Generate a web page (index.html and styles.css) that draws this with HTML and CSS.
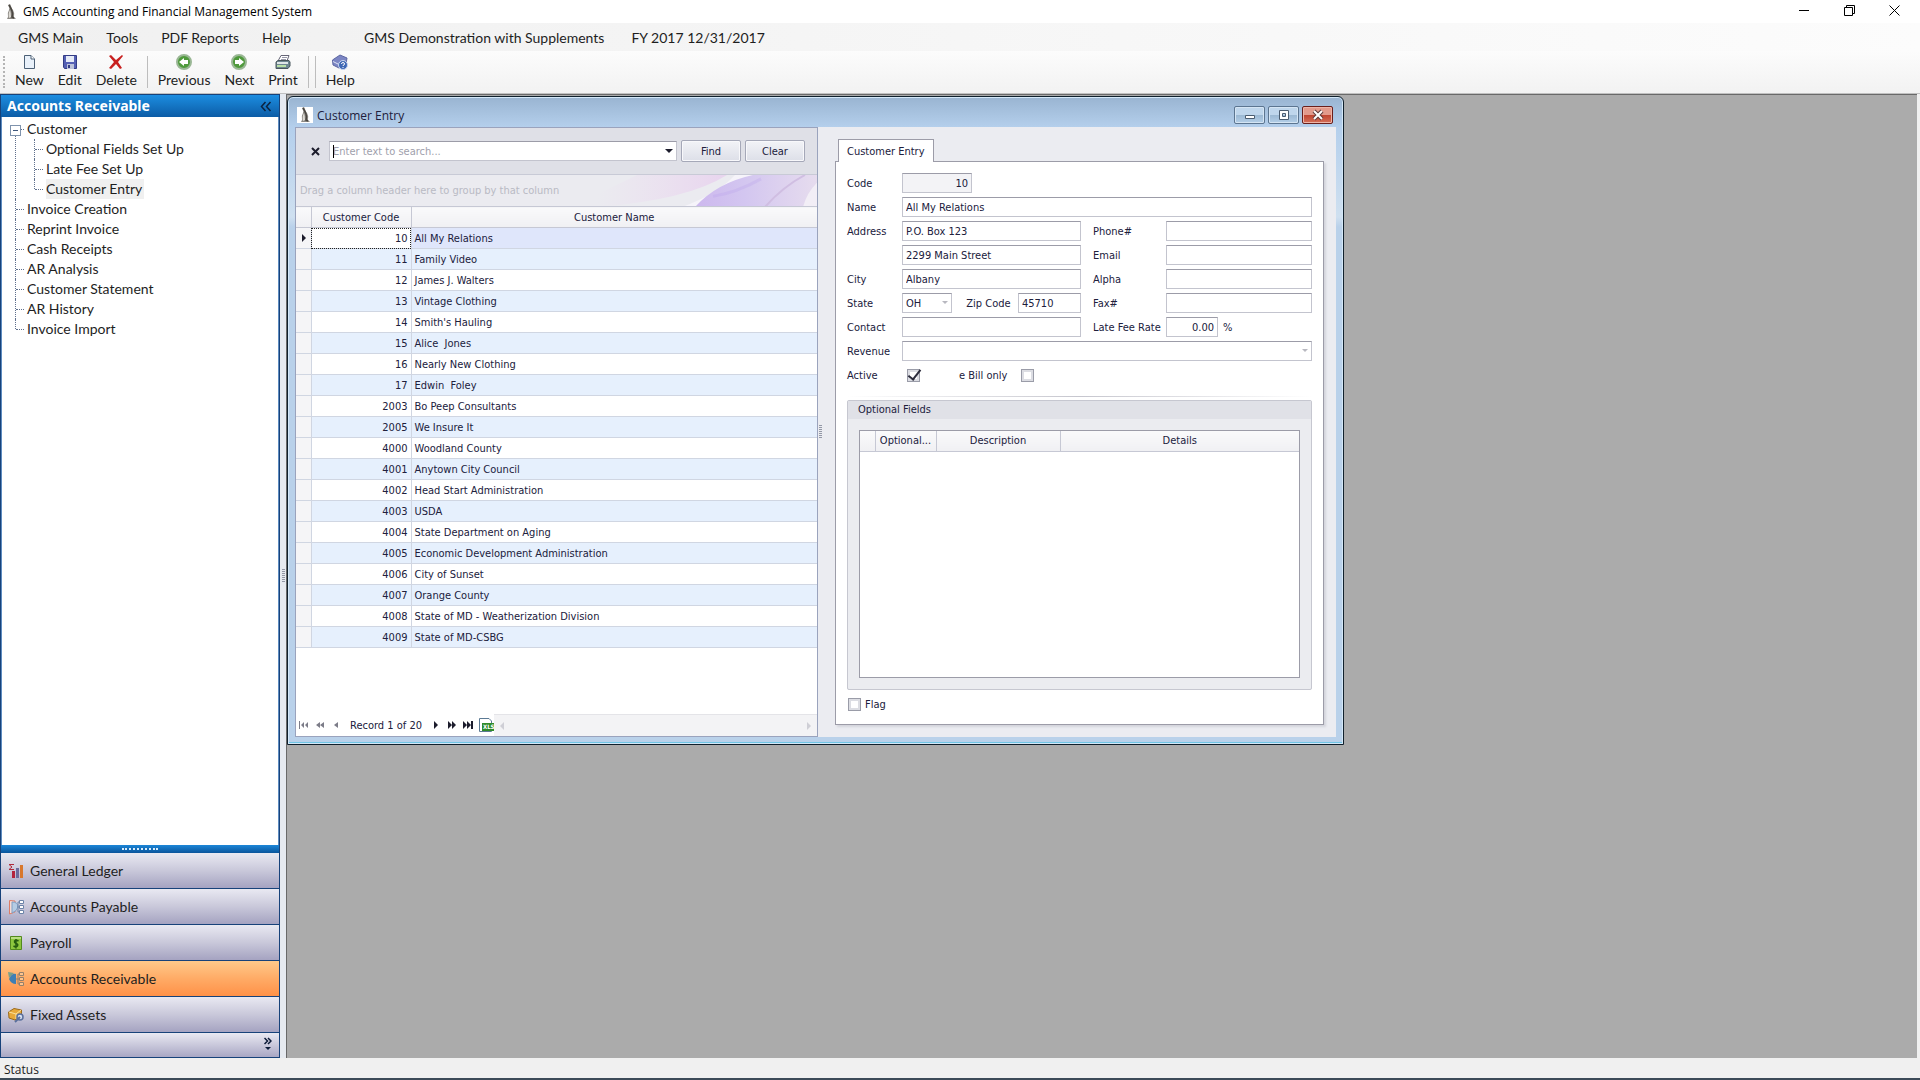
FILE: index.html
```html
<!DOCTYPE html>
<html lang="en">

<head>
  <meta charset="UTF-8">
  <title>GMS Accounting and Financial Management System</title>
  <link rel="stylesheet" href="styles.css">
</head>

<body>
  <svg width="0" height="0" class="defs">
    <symbol id="penguin" viewBox="0 0 16 16">
      <path d="M5 1 L7 0 L8 2 Q8 4 10 6 Q12 9 11 13 L13 15 H4 L5 13 Q4 9 6 6 Q7 4 5 1Z" fill="#8b8883" />
      <path d="M7 6 Q5 9 6 14 L8 13 Q8 9 7 6Z" fill="#dedbd5" />
      <path d="M6 1 Q8 4 9 7 Q10 10 9 13 L11 14" stroke="#4a4641" stroke-width="1.5" fill="none" />
    </symbol>
    <symbol id="arrow" viewBox="0 0 16 16">
      <circle cx="8" cy="8" r="7" fill="#4f9a3c" stroke="#9ab795" stroke-width="2" />
      <path d="M3 8 L8 4 V6 H12 V10 H8 V12Z" fill="#fff" />
    </symbol>
  </svg>

  <header class="titlebar">
    <svg class="app-icon" width="16" height="16"><use href="#penguin" /></svg>
    <span class="app-title">GMS Accounting and Financial Management System</span>
    <div class="sys-buttons">
      <button aria-label="Minimize"><svg width="11" height="11"><path d="M0 5.5H10" stroke="#000" /></svg></button>
      <button aria-label="Restore"><svg width="11" height="11"><path d="M0.5 2.5H8.5V10.5H0.5ZM2.5 2.5V0.5H10.5V8.5H8.5" stroke="#000" fill="none" /></svg></button>
      <button aria-label="Close"><svg width="11" height="11"><path d="M0.5 0.5L10.5 10.5M10.5 0.5L0.5 10.5" stroke="#000" /></svg></button>
    </div>
  </header>

  <nav class="menubar">
    <button>GMS Main</button>
    <button>Tools</button>
    <button>PDF Reports</button>
    <button>Help</button>
    <span class="company">GMS Demonstration with Supplements</span>
    <span class="fiscal">FY 2017 12/31/2017</span>
  </nav>

  <div class="toolbar">
    <button>
      <svg width="16" height="16"><path d="M3.5 1.5H10L13.5 5V14.5H3.5Z" fill="#e9f1fa" stroke="#4c6076" /><path d="M10 1.5V5H13.5" fill="#fff" stroke="#4c6076" /></svg>
      New
    </button>
    <button>
      <svg width="16" height="16"><path d="M1.5 1.5H14.5V14.5H2.5L1.5 13Z" fill="#5560b4" stroke="#333c85" /><path d="M4 2H12V8H4Z" fill="#e6ebf7" /><path d="M5 10H12V15H5Z" fill="#bcc2da" /><path d="M6 11H8V14H6Z" fill="#333c85" /></svg>
      Edit
    </button>
    <button>
      <svg width="16" height="16"><path d="M1 2L3 1L8 6L14 1L15 2L10 8L14 14L12 15L8 10L3 15L1 14L6 8Z" fill="#c8201f" /></svg>
      Delete
    </button>
    <i class="sep"></i>
    <button>
      <svg width="16" height="16"><use href="#arrow" /></svg>
      Previous
    </button>
    <button>
      <svg width="16" height="16"><g transform="rotate(180 8 8)"><use href="#arrow" /></g></svg>
      Next
    </button>
    <button>
      <svg width="16" height="16"><path d="M6 1.5H14L12 7H3Z" fill="#fff" stroke="#667" /><path d="M7 3.5H12M6 5.5H11" stroke="#99a" /><path d="M1 8L3 6.5H14L15 8V12L13 14.5H1Z" fill="#6e8791" stroke="#49565c" /><path d="M2 8H13V10H2Z" fill="#dfe6e8" /><path d="M2 11H11V13H2Z" fill="#b9e0a6" /></svg>
      Print
    </button>
    <i class="sep"></i>
    <i class="sep"></i>
    <button>
      <svg width="16" height="16"><path d="M0.5 6L8 1L15 4L14 10L7 14L1 11Z" fill="#7c86c4" stroke="#5c66a2" /><path d="M1 7.5L7 10.5L13 7" stroke="#dfe3f5" fill="none" /><circle cx="11" cy="11" r="4.5" fill="#3f68b5" stroke="#c9d6f0" /><path d="M9.5 10Q9.5 8.5 11 8.5Q12.5 8.5 12.5 10Q12.5 11 11 11.5V12M11 13V14" stroke="#fff" fill="none" /></svg>
      Help
    </button>
  </div>

  <main class="workspace">
    <aside class="sidebar">
      <div class="side-head">
        <h2>Accounts Receivable</h2>
        <svg width="12" height="11"><path d="M5.5 1L1.5 5.5L5.5 10M10.5 1L6.5 5.5L10.5 10" stroke="#0b2340" stroke-width="1.5" fill="none" /></svg>
      </div>

      <div class="side-body">
        <ul class="tree">
          <li class="open"><a href="#">Customer</a>
            <ul>
              <li><a href="#">Optional Fields Set Up</a></li>
              <li><a href="#">Late Fee Set Up</a></li>
              <li><a href="#" class="current">Customer Entry</a></li>
            </ul>
          </li>
          <li><a href="#">Invoice Creation</a></li>
          <li><a href="#">Reprint Invoice</a></li>
          <li><a href="#">Cash Receipts</a></li>
          <li><a href="#">AR Analysis</a></li>
          <li><a href="#">Customer Statement</a></li>
          <li><a href="#">AR History</a></li>
          <li><a href="#">Invoice Import</a></li>
        </ul>
      </div>

      <div class="side-grip"><span></span></div>

      <div class="modules">
        <button>
          <svg width="16" height="16"><path d="M6 1.5H1L4 4L1 6.5H6" stroke="#b02a3a" fill="none" /><path d="M4 8H7V15H4Z" fill="#b3243c" /><path d="M8 5H11V15H8Z" fill="#6b6b9c" /><path d="M12 2H15V15H12Z" fill="#d8772c" /></svg>
          General Ledger
        </button>
        <button>
          <svg width="16" height="16"><path d="M1.5 1.5L7 2V13L1.5 15Z" fill="#f6dcd6" stroke="#dc7c66" /><path d="M4 3Q10 3 10 8Q9 12 4 14Z" fill="#b5cce4" stroke="#7f9fc4" /><path d="M9 8H12M10 3V13M10 3H12M10 13H12" stroke="#7088ac" fill="none" /><path d="M11.5 1.5H15.5V4.5H11.5ZM11.5 6.5H15.5V9.5H11.5ZM11.5 11.5H15.5V14.5H11.5Z" fill="#fff" stroke="#6c84a8" /></svg>
          Accounts Payable
        </button>
        <button>
          <svg width="16" height="16"><path d="M2.5 1.5H13.5V14.5H2.5Z" fill="#8cc63e" stroke="#538a1e" /><path d="M3 3H13" stroke="#e8f6c8" /><path d="M10.5 6Q8 4.5 6.5 6Q6 7.5 8 8.5Q10.500 9 9.5 11Q8 12.5 5.5 11M8 4V13.5" stroke="#265c10" stroke-width="1.5" fill="none" /></svg>
          Payroll
        </button>
        <button class="active">
          <svg width="16" height="16"><path d="M0 1L6 2L1 7Z" fill="#7aa08a" /><path d="M1 8Q4 2 8 3V13Q3 13 1 8Z" fill="#3f7fb4" /><path d="M8 8H12M10 3V13M10 3H12M10 13H12" stroke="#94806c" fill="none" /><path d="M11.5 1.5H15.5V4.5H11.5ZM11.5 6.5H15.5V9.5H11.5ZM11.5 11.5H15.5V14.5H11.5Z" fill="#ffc48c" stroke="#94806c" /></svg>
          Accounts Receivable
        </button>
        <button>
          <svg width="16" height="16"><path d="M0.5 5L6 1.5L13.5 3L13.5 8L7 13L1 11Z" fill="#e8a93a" stroke="#9a6a1c" /><path d="M1 5L8 7L13 3M8 7V12" stroke="#fbe2a0" fill="none" /><circle cx="12" cy="10" r="3" fill="#d5dff0" stroke="#5a6f9c" stroke-width="1.5" /><path d="M7 15L12 10" stroke="#5a6f9c" stroke-width="2" /></svg>
          Fixed Assets
        </button>
        <div class="more">
          <svg width="8" height="14"><path d="M0.5 1L3.5 4L0.5 7M4 1L7 4L4 7" stroke="#0b1a38" stroke-width="1.5" fill="none" /><path d="M1 10H7L4 13Z" fill="#0b1a38" /></svg>
        </div>
      </div>
    </aside>

    <div class="splitter"><span></span></div>

    <section class="desktop">
      <div class="window">
        <div class="win-head">
          <svg class="win-icon" width="16" height="16"><use href="#penguin" /></svg>
          <h1>Customer Entry</h1>
          <button aria-label="Minimize"><svg width="12" height="12"><path d="M1.5 6.5H10.5V9.5H1.5Z" fill="#fff" stroke="#4a5c70" /></svg></button>
          <button aria-label="Maximize"><svg width="12" height="12"><path d="M1.5 1.5H10.5V10.5H1.5ZM4.5 4.5V7.5H7.5V4.5Z" fill="#fff" fill-rule="evenodd" stroke="#4a5c70" /></svg></button>
          <button class="close" aria-label="Close"><svg width="12" height="12"><path d="M2 2L10 10M10 2L2 10" stroke="#5f3a3a" stroke-width="4" /><path d="M2 2L10 10M10 2L2 10" stroke="#fff" stroke-width="2" /></svg></button>
        </div>

        <div class="win-body">
          <div class="list">
            <div class="search">
              <button class="search-close" aria-label="Close search"><svg width="9" height="9"><path d="M1 1L8 8M8 1L1 8" stroke="#1c1c2c" stroke-width="2" /></svg></button>
              <div class="search-box">
                <input type="text" placeholder="Enter text to search..." aria-label="Search">
              </div>
              <button class="btn">Find</button>
              <button class="btn">Clear</button>
            </div>

            <div class="group-panel">
              <span>Drag a column header here to group by that column</span>
              <svg width="240" height="32" viewBox="0 0 240 33" preserveAspectRatio="none">
                <defs>
                  <linearGradient id="pink"><stop offset="0" stop-color="#ecdcf0" stop-opacity="0" /><stop offset="1" stop-color="#e8d4ee" /></linearGradient>
                  <linearGradient id="violet"><stop offset="0" stop-color="#cdb8ee" /><stop offset="0.4" stop-color="#d3c6f0" /><stop offset="1" stop-color="#e6dcee" /></linearGradient>
                </defs>
                <path d="M20 33Q110 26 150 0H60L20 20Z" fill="url(#pink)" />
                <path d="M105 33Q140 20 158 0H176Q145 14 120 33Z" fill="#f6f4fa" />
                <path d="M118 33Q140 8 176 0H240V8Q232 20 228 33Z" fill="url(#violet)" />
                <path d="M188 33Q206 12 228 0" stroke="#d0bee2" stroke-width="2" fill="none" />
                <path d="M136 22Q160 18 184 4" stroke="#b9a2ea" stroke-width="3" fill="none" opacity="0.3" />
                <path d="M226 33Q230 18 240 8V33Z" fill="#f2eef6" />
              </svg>
            </div>

            <table class="grid">
              <thead>
                <tr><th class="mark"></th><th class="code">Customer Code</th><th>Customer Name</th></tr>
              </thead>
              <tbody>
                <tr class="selected"><td><i class="pointer"></i></td><td>10</td><td>All My Relations</td></tr>
                <tr><td></td><td>11</td><td>Family Video</td></tr>
                <tr><td></td><td>12</td><td>James J. Walters</td></tr>
                <tr><td></td><td>13</td><td>Vintage Clothing</td></tr>
                <tr><td></td><td>14</td><td>Smith's Hauling</td></tr>
                <tr><td></td><td>15</td><td>Alice&nbsp; Jones</td></tr>
                <tr><td></td><td>16</td><td>Nearly New Clothing</td></tr>
                <tr><td></td><td>17</td><td>Edwin&nbsp; Foley</td></tr>
                <tr><td></td><td>2003</td><td>Bo Peep Consultants</td></tr>
                <tr><td></td><td>2005</td><td>We Insure It</td></tr>
                <tr><td></td><td>4000</td><td>Woodland County</td></tr>
                <tr><td></td><td>4001</td><td>Anytown City Council</td></tr>
                <tr><td></td><td>4002</td><td>Head Start Administration</td></tr>
                <tr><td></td><td>4003</td><td>USDA</td></tr>
                <tr><td></td><td>4004</td><td>State Department on Aging</td></tr>
                <tr><td></td><td>4005</td><td>Economic Development Administration</td></tr>
                <tr><td></td><td>4006</td><td>City of Sunset</td></tr>
                <tr><td></td><td>4007</td><td>Orange County</td></tr>
                <tr><td></td><td>4008</td><td>State of MD - Weatherization Division</td></tr>
                <tr><td></td><td>4009</td><td>State of MD-CSBG</td></tr>
              </tbody>
            </table>

            <div class="navigator">
              <div class="records">
                <button class="dim" aria-label="First"><svg width="10" height="8"><path d="M0 0H1V8H0ZM5 1V7L2 4ZM9 1V7L6 4Z" /></svg></button>
                <button class="dim" aria-label="Previous page"><svg width="10" height="8"><path d="M5 1V7L1 4ZM9 1V7L5 4Z" /></svg></button>
                <button class="dim" aria-label="Previous"><svg width="10" height="8"><path d="M7 1V7L3 4Z" /></svg></button>
                <span>Record 1 of 20</span>
                <button aria-label="Next"><svg width="10" height="8"><path d="M3 0V8L7 4Z" /></svg></button>
                <button aria-label="Next page"><svg width="10" height="8"><path d="M1 0V8L5 4ZM5 0V8L9 4Z" /></svg></button>
                <button aria-label="Last"><svg width="10" height="8"><path d="M0 0V8L4 4ZM4 0V8L8 4ZM8 0H10V8H8Z" /></svg></button>
                <button class="xls" aria-label="Export"><svg width="16" height="16"><path d="M0.5 1.5H10L12.5 4V14.5H0.5Z" fill="#fff" stroke="#5c7a94" /><path d="M3 6H15V14H3Z" fill="#2f8a2a" /><text x="4" y="12" font-size="6" font-weight="bold" fill="#fff">XLS</text></svg></button>
              </div>
              <div class="scroll"><i class="left"></i><i class="right"></i></div>
            </div>
          </div>

          <div class="win-splitter"><span></span></div>

          <div class="detail">
            <div class="tab">Customer Entry</div>
            <form class="page">
              <div class="fields">
                <label for="code">Code</label>
                <input id="code" class="short num" type="text" value="10" readonly>

                <label for="name">Name</label>
                <input id="name" class="wide" type="text" value="All My Relations">

                <label for="address1">Address</label>
                <input id="address1" type="text" value="P.O. Box 123">
                <label for="phone" class="second">Phone#</label>
                <input id="phone" type="text">

                <label for="address2"></label>
                <input id="address2" type="text" value="2299 Main Street" aria-label="Address line 2">
                <label for="email" class="second">Email</label>
                <input id="email" type="text">

                <label for="city">City</label>
                <input id="city" type="text" value="Albany">
                <label for="alpha" class="second">Alpha</label>
                <input id="alpha" type="text">

                <label for="state">State</label>
                <div class="pair">
                  <div class="drop state"><select id="state"><option>OH</option></select></div>
                  <label for="zip">Zip Code</label>
                  <input id="zip" class="zip" type="text" value="45710">
                </div>
                <label for="fax" class="second">Fax#</label>
                <input id="fax" type="text">

                <label for="contact">Contact</label>
                <input id="contact" type="text">
                <label for="rate" class="second">Late Fee Rate</label>
                <div class="rate"><input id="rate" class="num" type="text" value="0.00"><span>%</span></div>

                <label for="revenue">Revenue</label>
                <div class="drop wide"><select id="revenue"><option></option></select></div>

                <label for="active">Active</label>
                <div class="checks wide">
                  <input id="active" type="checkbox" checked>
                  <label for="ebill">e Bill only</label>
                  <input id="ebill" type="checkbox">
                </div>
              </div>

              <hr>

              <fieldset class="optional">
                <h3>Optional Fields</h3>
                <div class="optional-body">
                  <table>
                    <thead>
                      <tr><th class="mark"></th><th class="opt">Optional...</th><th class="desc">Description</th><th>Details</th></tr>
                    </thead>
                  </table>
                </div>
              </fieldset>

              <div class="flag">
                <input id="flag" type="checkbox">
                <label for="flag">Flag</label>
              </div>
            </form>
          </div>
        </div>
      </div>
    </section>
  </main>

  <footer class="status">Status</footer>
</body>

</html>
```

FILE: styles.css
```css
* {
  box-sizing: border-box;
}

body {
  margin: 0;
  height: 100vh;
  display: flex;
  flex-direction: column;
  font-family: Lato, "Liberation Sans", sans-serif;
  font-size: 14px;
  color: #1e1e1e;
  background: #f0f0f0;
  overflow: hidden;
}

button {
  font: inherit;
  color: inherit;
  background: none;
  border: 0;
  padding: 0;
}

a {
  color: inherit;
  text-decoration: none;
}

svg {
  display: block;
}

.defs {
  position: absolute;
}

/* title bar */
.titlebar {
  display: flex;
  align-items: center;
  height: 23px;
  flex: none;
  background: #fff;
  padding: 0 3px;
}

.app-title {
  flex: 1;
  margin-left: 4px;
  font-family: "Open Sans", "Noto Sans", sans-serif;
  font-size: 12px;
  color: #000;
}

.sys-buttons {
  display: flex;
}

.sys-buttons button {
  width: 45px;
  height: 23px;
  display: flex;
  align-items: center;
  justify-content: center;
  padding-bottom: 2px;
}

/* menu */
.menubar {
  display: flex;
  align-items: center;
  height: 28px;
  flex: none;
  padding-left: 18px;
  gap: 23px;
  background: linear-gradient(to right, #f0f0f0, #fcfcfc);
}

.company {
  margin-left: 50px;
}

.fiscal {
  margin-left: 4px;
}

/* toolbar */
.toolbar {
  display: flex;
  align-items: center;
  height: 43px;
  flex: none;
  padding-left: 8px;
  background: linear-gradient(#fcfcfc, #f2f2f2);
  border-bottom: 1px solid #c0c0c0;
  position: relative;
}

.toolbar::before {
  content: "";
  position: absolute;
  left: 3px;
  top: 5px;
  height: 32px;
  border-left: 2px dotted #b4b4b4;
}

.toolbar button {
  display: flex;
  flex-direction: column;
  align-items: center;
  line-height: 20px;
  padding: 0 7px;
}

.sep {
  width: 1px;
  height: 32px;
  margin: 0 3px;
  background: #bdbdbd;
}

.workspace {
  display: flex;
  flex: 1;
  min-height: 0;
}

/* sidebar */
.sidebar {
  width: 280px;
  display: flex;
  flex-direction: column;
  border: 1px solid #17427a;
}

.side-head {
  display: flex;
  align-items: center;
  justify-content: space-between;
  height: 22px;
  padding: 0 7px 0 6px;
  background: linear-gradient(#1c8de0, #0c5ca6);
}

.side-head h2 {
  margin: 0;
  font-family: "Noto Sans", sans-serif;
  font-size: 14px;
  line-height: 20px;
  color: #fff;
}

.side-body {
  flex: 1;
  background: #fff;
  border: 1px solid #5e8cc0;
  border-width: 0 1px;
  padding-top: 2px;
}

.tree,
.tree ul {
  list-style: none;
  margin: 0;
  padding: 0;
}

.tree {
  padding-left: 13px;
}

.tree li {
  position: relative;
  line-height: 20px;
  padding-left: 12px;
}

/* dotted branch lines */
.tree li::before {
  content: "";
  position: absolute;
  left: 0;
  top: 0;
  height: 100%;
  border-left: 1px dotted #60708c;
}

.tree li:last-child::before {
  height: 10px;
}

.tree li::after {
  content: "";
  position: absolute;
  left: 1px;
  top: 10px;
  width: 8px;
  border-top: 1px dotted #60708c;
}

.tree .open::before {
  top: 14px;
  height: calc(100% - 14px);
}

.tree .open > ul {
  margin-left: 7px;
}

.tree .open > a::before {
  content: "";
  position: absolute;
  left: -5px;
  top: 6px;
  width: 9px;
  height: 9px;
  border: 1px solid #7f93ad;
  background: linear-gradient(#40587c, #40587c) center / 5px 1px no-repeat #fff;
  z-index: 1;
}

.tree a {
  display: inline-block;
  padding: 0 2px 0 0;
}

.tree .current {
  background: #f0f0f0;
}

.side-grip {
  height: 8px;
  display: flex;
  align-items: center;
  justify-content: center;
  background: linear-gradient(#1c86d8, #0a559c);
}

.side-grip span {
  width: 36px;
  border-top: 2px dotted #d8ecfc;
}

.modules button {
  display: flex;
  align-items: center;
  gap: 6px;
  width: 100%;
  height: 36px;
  padding-left: 7px;
  border-bottom: 1px solid #17427a;
  background: linear-gradient(#e9e9f2, #c9c8da 50%, #a5a3c1);
}

.modules .active {
  background: linear-gradient(#ffc98a, #ffab66 50%, #ff9148);
}

.more {
  display: flex;
  justify-content: flex-end;
  height: 24px;
  padding: 4px 7px 0 0;
  background: linear-gradient(#e9e9f2, #a9a7c4);
}

.splitter {
  display: flex;
  align-items: center;
  justify-content: center;
  width: 6px;
  background: #e6eaf0;
}

.splitter span,
.win-splitter span {
  width: 3px;
  height: 14px;
  background: repeating-linear-gradient(#9398a6 0 1px, transparent 1px 2px);
}

/* mdi area */
.desktop {
  flex: 1;
  margin-right: 3px;
  position: relative;
  background: #ababab;
  border: 1px solid #696969;
  border-width: 1px 0 0 1px;
}

.window {
  position: absolute;
  left: 0;
  top: 1px;
  width: 1057px;
  height: 649px;
  display: flex;
  flex-direction: column;
  padding: 0 7px 7px 7px;
  border: 1px solid #10202c;
  border-radius: 6px 6px 0 0;
  background: linear-gradient(#99b4d1, #b4cfec 30px, #cfe0f0 120px, #b9d1ea 130px);
  box-shadow: inset 0 0 0 1px #d4e8f8, inset 0 -2px 0 #6fc4e4;
  font-family: "DejaVu Sans Condensed", "Noto Sans", sans-serif;
  font-size: 11px;
  color: #20203c;
}

.win-head {
  display: flex;
  align-items: center;
  gap: 3px;
  height: 30px;
  padding: 6px 3px 0 2px;
}

.win-icon {
  background: #fff;
}

.win-head h1 {
  flex: 1;
  margin: 0 0 0 1px;
  font-family: "Open Sans", "Noto Sans", sans-serif;
  font-size: 12px;
  font-weight: normal;
}

.win-head button {
  display: flex;
  align-items: center;
  justify-content: center;
  width: 31px;
  height: 18px;
  border: 1px solid #5c7590;
  border-radius: 2px;
  background: linear-gradient(#bfd6ec 50%, #9bb8d3 50%, #b4cfe8);
  box-shadow: inset 0 0 0 1px #d5e5f4;
}

.win-head .close {
  border-color: #6a1f1c;
  background: linear-gradient(#e29a8c 50%, #c0432f 50%, #d4705a);
  box-shadow: inset 0 0 0 1px #eeb5a8;
}

.win-body {
  display: flex;
  flex: 1;
  background: #ebecf1;
}

/* customer list */
.list {
  width: 523px;
  display: flex;
  flex-direction: column;
  background: #fff;
  border: 1px solid #9aa3bd;
}

.search {
  display: flex;
  align-items: center;
  gap: 4px;
  height: 46px;
  padding: 0 12px 0 15px;
  background: #dfe0e7;
}

.search-close {
  margin-right: 5px;
}

.search-box {
  flex: 1;
  position: relative;
}

.search-box::before {
  content: "";
  position: absolute;
  left: 4px;
  top: 4px;
  height: 13px;
  border-left: 1px solid #000;
}

.search-box::after,
.drop::after {
  content: "";
  position: absolute;
  right: 4px;
  top: 8px;
  border: 4px solid transparent;
  border-top-color: #1c1c2c;
  border-bottom: 0;
}

.drop::after {
  border-width: 3px 3px 0;
  border-top-color: #b8b8c0;
}

input[type="text"],
select {
  appearance: none;
  width: 100%;
  height: 20px;
  margin: 0;
  padding: 0 3px;
  border: 1px solid #c3c4ce;
  border-top-color: #9c9ca8;
  border-radius: 0;
  background: #fff;
  font: inherit;
  color: inherit;
  display: block;
}

input::placeholder {
  color: #a0a0ac;
  opacity: 1;
}

.btn {
  width: 60px;
  height: 22px;
  border: 1px solid #a5a8b8;
  border-radius: 2px;
  background: linear-gradient(#f2f3f7, #dddfe8);
  box-shadow: inset 0 0 0 1px #f8f8fb;
}

.group-panel {
  display: flex;
  align-items: center;
  justify-content: space-between;
  height: 32px;
  padding-left: 4px;
  border-top: 1px solid #c8cad6;
  background: #ebebf0;
  color: #b9bac4;
}

table {
  width: 100%;
  border-collapse: collapse;
  table-layout: fixed;
}

th {
  height: 21px;
  padding: 0;
  font-weight: normal;
  text-align: center;
  border: 1px solid #c6c8d4;
  border-left: 0;
  background: linear-gradient(#fafafb, #f0f0f3);
}

th:last-child {
  border-right: 0;
}

.mark {
  width: 15px;
}

.code {
  width: 100px;
}

.grid td {
  height: 21px;
  padding: 0 3px;
  border: 1px solid #d0d6e2;
  border-left: 0;
  white-space: nowrap;
}

.grid td:last-child {
  border-right: 0;
}

.grid td:nth-child(2) {
  text-align: right;
}

.grid tr:nth-child(even) td {
  background: #e6f0fd;
}

.grid tr.selected td {
  background: #dfe6fb;
}

.grid tr td:first-child,
.grid tr.selected td:first-child {
  background: #f5f5f7;
}

.grid tr.selected td:nth-child(2) {
  background: #fff;
  outline: 1px dotted #222;
  outline-offset: -1px;
}

.pointer {
  display: block;
  width: 0;
  margin-left: 3px;
  border: 4px solid transparent;
  border-left-color: #1c1c2c;
  border-right: 0;
}

.navigator {
  display: flex;
  height: 22px;
  margin-top: auto;
}

.records {
  display: flex;
  align-items: center;
  gap: 6px;
  width: 198px;
  padding-left: 3px;
}

.records span {
  margin: 0 3px;
  flex: 1;
  white-space: nowrap;
}

.records svg {
  fill: #1c1c2c;
}

.records .dim svg {
  fill: #7c7c88;
}

.scroll {
  flex: 1;
  display: flex;
  justify-content: space-between;
  align-items: center;
  padding: 0 6px;
  background: #f3f3f5;
  border-top: 1px solid #e4e4e8;
}

.scroll i {
  border: 4px solid transparent;
}

.scroll .left {
  border-right-color: #cfcfd6;
  border-left: 0;
}

.scroll .right {
  border-left-color: #cfcfd6;
  border-right: 0;
}

.win-splitter {
  display: flex;
  align-items: center;
  width: 17px;
  padding-left: 1px;
}

/* detail form */
.detail {
  flex: 1;
  display: flex;
  flex-direction: column;
  padding: 12px 12px 12px 0;
}

.tab {
  align-self: flex-start;
  height: 23px;
  margin: 0 0 -1px 3px;
  padding: 0 8px;
  line-height: 24px;
  border: 1px solid #9c9ca8;
  border-bottom: 0;
  background: #fff;
  z-index: 1;
}

.page {
  flex: 1;
  display: flex;
  flex-direction: column;
  padding: 11px 11px 13px;
  border: 1px solid #9c9ca8;
  background: #fff;
  box-shadow: 2px 2px 2px #d4d5dc;
}

.fields {
  display: grid;
  grid-template-columns: 55px 179px 85px 1fr;
  grid-auto-rows: 20px;
  row-gap: 4px;
  align-items: center;
  white-space: nowrap;
}

.wide {
  grid-column: span 3;
}

.fields .short {
  width: 70px;
  grid-column: span 3;
  background: #f3f3f6;
}

.fields .num {
  text-align: right;
}

.second {
  padding-left: 12px;
}

.pair,
.rate,
.checks,
.flag {
  display: flex;
  align-items: center;
}

.pair {
  justify-content: space-between;
}

.pair label {
  margin-left: 7px;
}

.drop {
  position: relative;
}

.state {
  width: 50px;
}

.fields .zip {
  width: 63px;
}

.rate input {
  width: 52px;
}

.rate span {
  margin-left: 5px;
}

.checks {
  padding-left: 5px;
}

.checks label {
  margin: 0 14px 0 39px;
}

input[type="checkbox"] {
  appearance: none;
  width: 13px;
  height: 13px;
  margin: 0;
  border: 1px solid #9a9ca8;
  background: #fff;
  box-shadow: inset 0 0 0 2px #dcdde3;
  position: relative;
}

input[type="checkbox"]:checked::after {
  content: "";
  position: absolute;
  left: 3px;
  top: -3px;
  width: 5px;
  height: 11px;
  border: solid #2c2c3c;
  border-width: 0 2px 2px 0;
  transform: rotate(38deg);
}

hr {
  width: 100%;
  height: 1px;
  margin: 11px 0 3px;
  border: 0;
  background: linear-gradient(to right, #fff, #c6c6ce 50%, #fff);
}

.optional {
  flex: 1;
  display: flex;
  flex-direction: column;
  margin: 0;
  padding: 0;
  border: 1px solid #c6c7d0;
  border-radius: 2px;
  background: #ebecf0;
}

.optional h3 {
  margin: 0;
  padding-left: 10px;
  font-size: 11px;
  font-weight: normal;
  line-height: 18px;
  background: #e0e1e7;
}

.optional-body {
  flex: 1;
  margin: 11px;
  border: 1px solid #9c9ca8;
  background: #fff;
}

.optional-body th {
  border-top: 0;
  height: 20px;
}

.opt {
  width: 61px;
}

.desc {
  width: 124px;
}

.flag {
  gap: 4px;
  margin-top: 8px;
  padding-left: 1px;
}

/* status line */
.status {
  height: 22px;
  flex: none;
  padding-left: 4px;
  font-family: "Open Sans", "Noto Sans", sans-serif;
  font-size: 12px;
  line-height: 24px;
  border-bottom: 2px solid #3c4a58;
}
```
